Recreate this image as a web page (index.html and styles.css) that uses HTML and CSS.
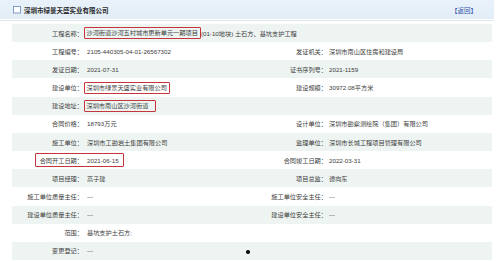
FILE: index.html
```html
<!DOCTYPE html>
<html lang="zh-CN">
<head>
<meta charset="utf-8">
<title>深圳市绿景天盛实业有限公司</title>
<link rel="stylesheet" href="styles.css">
</head>
<body>
<div class="page">
  <div class="header">
    <svg class="hicon" width="8" height="8" viewBox="0 0 8 8"><rect x="0.5" y="0.5" width="7" height="6.5" fill="#fff" stroke="#7f9dc4" stroke-width="1"/></svg>
    <span class="title">深圳市绿景天盛实业有限公司</span>
    <a class="back">【返回】</a>
  </div>
  <div class="rule"></div>
  <div class="rows">
    <div class="row g">
      <div class="lab">工程名称：</div>
      <div class="val span3"><span class="mark">沙河街道沙河五村城市更新单元一期项目</span>(01-10地块) 土石方、基坑支护工程</div>
    </div>
    <div class="row">
      <div class="lab">工程编号：</div>
      <div class="val">2105-440305-04-01-26567302</div>
      <div class="lab">发证机关：</div>
      <div class="val v2">深圳市南山区住房和建设局</div>
    </div>
    <div class="row g">
      <div class="lab">发证日期：</div>
      <div class="val">2021-07-31</div>
      <div class="lab">证书序列号：</div>
      <div class="val v2">2021-1159</div>
    </div>
    <div class="row">
      <div class="lab">建设单位：</div>
      <div class="val"><span class="mark">深圳市绿景天盛实业有限公司</span></div>
      <div class="lab">建设规模：</div>
      <div class="val v2">30972.08平方米</div>
    </div>
    <div class="row g">
      <div class="lab">建设地址：</div>
      <div class="val span3"><span class="mark wide">深圳市南山区沙河街道</span></div>
    </div>
    <div class="row">
      <div class="lab">合同价格：</div>
      <div class="val">18793万元</div>
      <div class="lab">设计单位：</div>
      <div class="val v2">深圳市勘察测绘院（集团）有限公司</div>
    </div>
    <div class="row g">
      <div class="lab">施工单位：</div>
      <div class="val">深圳市工勘岩土集团有限公司</div>
      <div class="lab">监理单位：</div>
      <div class="val v2">深圳市长城工程项目管理有限公司</div>
    </div>
    <div class="row">
      <div class="lab c1">合同开工日期：</div>
      <div class="val c2">2021-06-15</div>
      <div class="lab c3">合同竣工日期：</div>
      <div class="val v2 c4">2022-03-31</div>
      <div class="box8"></div>
    </div>
    <div class="row g">
      <div class="lab">项目经理：</div>
      <div class="val">高子建</div>
      <div class="lab">项目总监：</div>
      <div class="val v2">谭向东</div>
    </div>
    <div class="row">
      <div class="lab">施工单位质量主任：</div>
      <div class="val">---</div>
      <div class="lab">施工单位安全主任：</div>
      <div class="val v2">---</div>
    </div>
    <div class="row g">
      <div class="lab">建设单位质量主任：</div>
      <div class="val">---</div>
      <div class="lab">建设单位安全主任：</div>
      <div class="val v2">---</div>
    </div>
    <div class="row">
      <div class="lab">范围：</div>
      <div class="val span3">基坑支护土石方;</div>
    </div>
    <div class="row g">
      <div class="lab">变更登记：</div>
      <div class="val span3">---</div>
    </div>
  </div>
  <div class="dot"></div>
</div>
</body>
</html>
```

FILE: styles.css
```css
html, body {
  margin: 0;
  padding: 0;
  background: #fff;
}
body {
  font-family: "Liberation Sans", "Noto Sans CJK SC", sans-serif;
  font-size: 6.2px;
  color: #3c3c3c;
}
.page {
  position: relative;
  width: 494px;
  height: 261px;
  overflow: hidden;
}
.header {
  height: 19px;
  background: linear-gradient(#e9f2fa, #e2edf7);
  display: flex;
  align-items: center;
  padding: 0 17px 0 13px;
}
.hicon {
  display: block;
  margin-right: 3px;
  margin-top: 1px;
}
.title {
  font-size: 6.5px;
  font-weight: bold;
  color: #2a2a2a;
  flex: 1;
}
.back {
  font-size: 6.5px;
  color: #2f50a8;
}
.rule {
  height: 1px;
  margin-top: 1px;
  background: #e2e6e8;
}
.rows {
  margin: 3px 2px 0 12px;
  display: flex;
  flex-direction: column;
}
.row {
  display: grid;
  grid-template-columns: 71px 173px 71px 1fr;
  height: 18.17px;
}
.row.g {
  background: #eef4f2;
}
.lab, .val {
  display: flex;
  align-items: center;
  white-space: nowrap;
}
.lab {
  justify-content: flex-end;
}
.val {
  padding-left: 4px;
}
.v2 {
  padding-left: 2px;
}
.span3 {
  grid-column: 2 / 5;
}
.mark {
  display: inline-block;
  border: 1.5px solid #c4363c;
  border-radius: 1px;
  padding: 0 2px 0 2px;
  margin-left: -3.5px;
  margin-right: 0;
  line-height: 10px;
}
.mark.wide {
  padding-right: 7px;
}
.c1 { grid-area: 1 / 1; }
.c2 { grid-area: 1 / 2; }
.c3 { grid-area: 1 / 3; }
.c4 { grid-area: 1 / 4; }
.box8 {
  grid-area: 1 / 1 / 2 / 3;
  align-self: center;
  margin-left: 23px;
  width: 89px;
  height: 14px;
  box-sizing: border-box;
  border: 1.5px solid #c4363c;
  border-radius: 1px;
}
.dot {
  position: absolute;
  left: 246px;
  top: 250px;
  width: 3.5px;
  height: 3.5px;
  border-radius: 50%;
  background: #111;
}
```
